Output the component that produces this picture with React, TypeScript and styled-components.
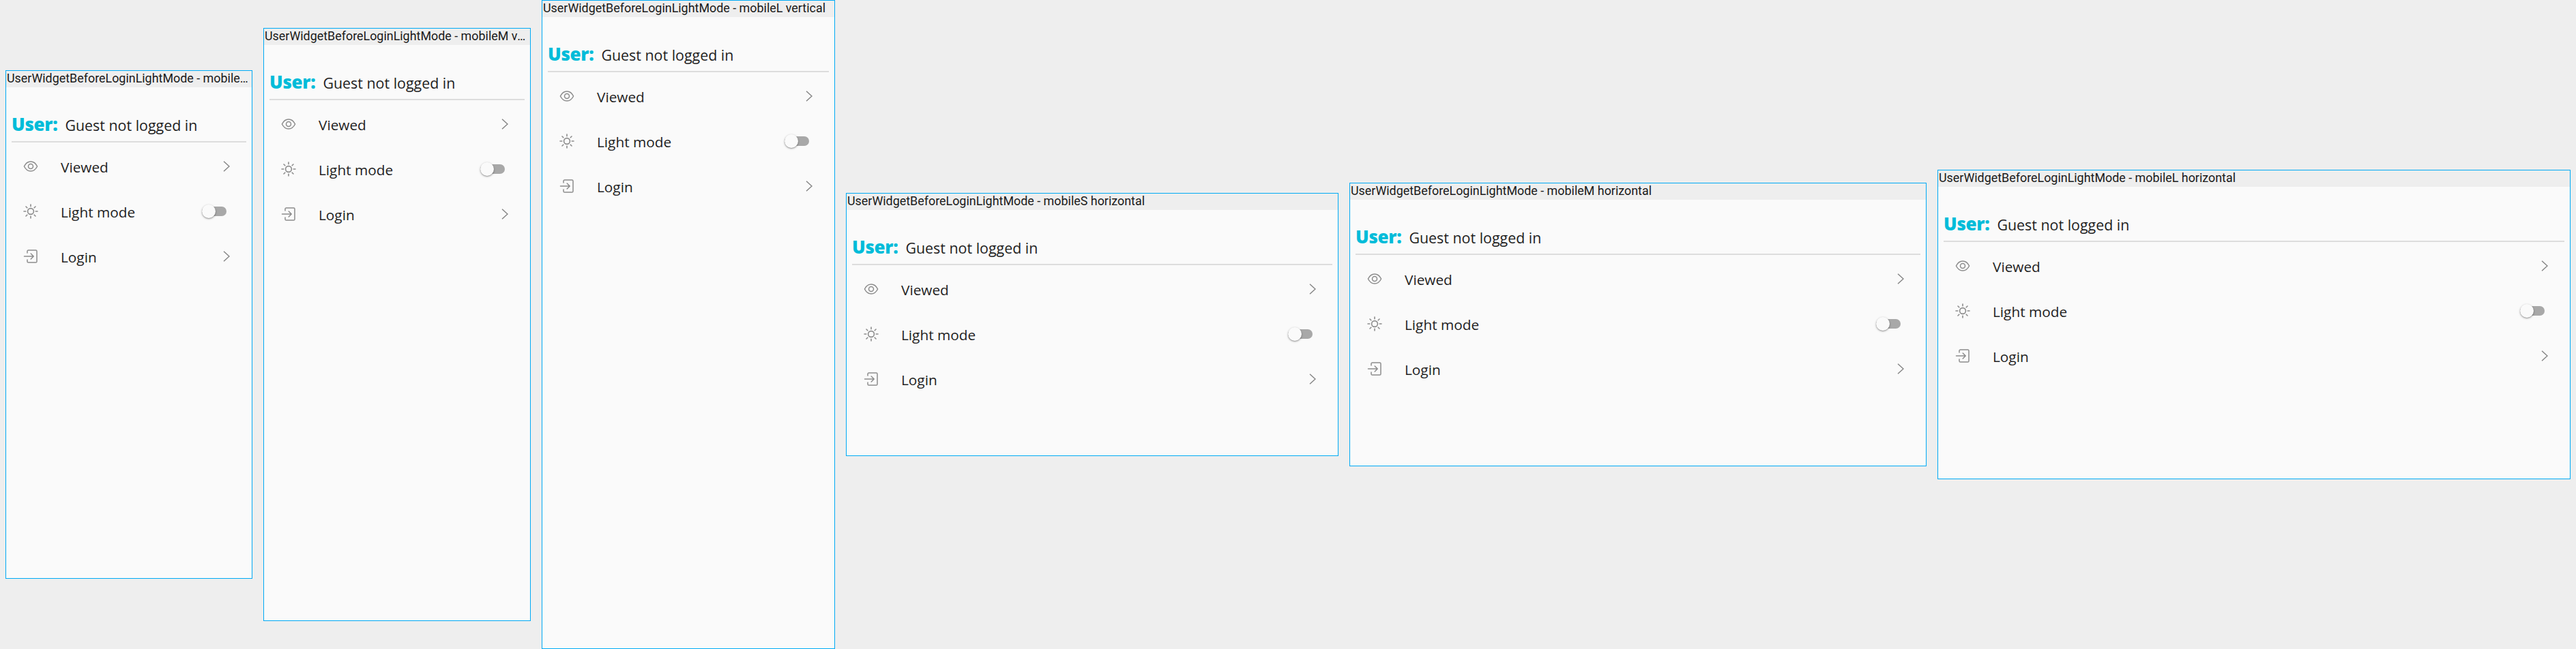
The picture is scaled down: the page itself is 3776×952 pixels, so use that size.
import React from "react";
import styled, { createGlobalStyle } from "styled-components";

const Global = createGlobalStyle`
  html, body { margin: 0; padding: 0; background: #eeeeee; }
  #root { width: 3776px; height: 952px; overflow: hidden; }
`;

const Canvas = styled.main`
  display: flex;
  align-items: center;
  gap: 16px;
  box-sizing: border-box;
  width: 3776px;
  height: 952px;
  padding: 0 8px;
  background: #eeeeee;
`;

const Frame = styled.section<{ $w: number; $h: number }>`
  flex: none;
  box-sizing: border-box;
  width: ${(p) => p.$w}px;
  height: ${(p) => p.$h}px;
  display: flex;
  flex-direction: column;
  border: 1px solid #00aaf5;
  background: #fafafa;
`;

const FrameTitle = styled.div`
  flex: none;
  height: 24px;
  padding-left: 1px;
  background: #eeeeee;
  color: #1a1a1a;
  font: 400 17.9px/22px Roboto, sans-serif;
  white-space: nowrap;
  overflow: hidden;
  text-overflow: ellipsis;
`;

const Widget = styled.div`
  flex: 1;
  padding: 0 8px;
  font-family: "Open Sans", sans-serif;
`;

const Header = styled.header`
  display: flex;
  align-items: baseline;
  height: 81px;
  box-sizing: border-box;
  padding-top: 38px;
  border-bottom: 2px solid #dddddd;
`;

const UserLabel = styled.span`
  color: #00bcd9;
  font-size: 26px;
  line-height: 32px;
  font-weight: 800;
  letter-spacing: -0.3px;
  margin-right: 11px;
`;

const UserName = styled.span`
  color: #1f1f1f;
  font-size: 21.4px;
  line-height: 32px;
`;

const Menu = styled.ul`
  list-style: none;
  margin: 2px 0 0;
  padding: 0;
`;

const Row = styled.li`
  display: flex;
  align-items: center;
  height: 66px;
  padding: 0 24px 0 16px;
`;

const IconSlot = styled.span`
  flex: none;
  width: 24px;
  height: 24px;
  margin-right: 32px;
  color: #8c8c8c;
  display: flex;
  align-items: center;
  justify-content: center;
`;

const RowLabel = styled.span`
  flex: 1;
  color: #1f1f1f;
  font-size: 20.8px;
  line-height: 28px;
  padding-top: 1px;
`;

const Switch = styled.span`
  position: relative;
  flex: none;
  width: 36px;
  height: 14px;
  margin-right: 5px;
  border-radius: 7px;
  background: #a8a8a8;
`;

const Knob = styled.span`
  position: absolute;
  left: 0;
  top: -3px;
  width: 20px;
  height: 20px;
  border-radius: 50%;
  background: #fafafa;
  box-shadow: 0 1px 3px rgba(0, 0, 0, 0.35), 0 1px 1px rgba(0, 0, 0, 0.14);
`;

const Eye = () => (
  <svg width="22" height="18" viewBox="0 0 22 18" fill="none" stroke="currentColor" strokeWidth="1.5">
    <path d="M1.4 9C3.4 4.9 6.9 2 11 2s7.6 2.9 9.6 7c-2 4.1-5.5 7-9.6 7S3.4 13.1 1.4 9Z" strokeLinejoin="round" />
    <circle cx="11" cy="9" r="3.5" />
  </svg>
);

const Sun = () => (
  <svg width="24" height="24" viewBox="0 0 24 24" fill="none" stroke="currentColor" strokeWidth="1.6" strokeLinecap="round">
    <circle cx="12" cy="12" r="4.4" />
    <path d="M12 2v2.8M12 19.2V22M2 12h2.8M19.2 12H22M5 5l1.8 1.8M17.2 17.2 19 19M5 19l1.8-1.8M17.2 6.8 19 5" />
  </svg>
);

const LoginIcon = () => (
  <svg width="22" height="22" viewBox="0 0 22 22" fill="none" stroke="currentColor" strokeWidth="1.5" strokeLinecap="round" strokeLinejoin="round">
    <path d="M6 6V3.6C6 2.7 6.7 2 7.6 2h10.8c.9 0 1.6.7 1.6 1.6v14.8c0 .9-.7 1.6-1.6 1.6H7.6C6.7 20 6 19.3 6 18.4V16" />
    <path d="M1.5 11H15M11.2 7l4 4-4 4" />
  </svg>
);

const Chevron = () => (
  <svg width="10" height="16" viewBox="0 0 10 16" fill="none" stroke="#858585" strokeWidth="1.5" style={{ display: "block" }}>
    <path d="M1 .8 9 8l-8 7.2" />
  </svg>
);

const frames = [
  { w: 362, h: 746, name: "mobileS vertical" },
  { w: 392, h: 870, name: "mobileM vertical" },
  { w: 430, h: 952, name: "mobileL vertical" },
  { w: 722, h: 386, name: "mobileS horizontal" },
  { w: 846, h: 416, name: "mobileM horizontal" },
  { w: 928, h: 454, name: "mobileL horizontal" },
];

export default function App() {
  return (
    <Canvas>
      <Global />
      {frames.map((f) => (
        <Frame key={f.name} $w={f.w} $h={f.h}>
          <FrameTitle>UserWidgetBeforeLoginLightMode - {f.name}</FrameTitle>
          <Widget>
            <Header>
              <UserLabel>User:</UserLabel>
              <UserName>Guest not logged in</UserName>
            </Header>
            <Menu>
              <Row>
                <IconSlot><Eye /></IconSlot>
                <RowLabel>Viewed</RowLabel>
                <Chevron />
              </Row>
              <Row>
                <IconSlot><Sun /></IconSlot>
                <RowLabel>Light mode</RowLabel>
                <Switch><Knob /></Switch>
              </Row>
              <Row>
                <IconSlot><LoginIcon /></IconSlot>
                <RowLabel>Login</RowLabel>
                <Chevron />
              </Row>
            </Menu>
          </Widget>
        </Frame>
      ))}
    </Canvas>
  );
}
